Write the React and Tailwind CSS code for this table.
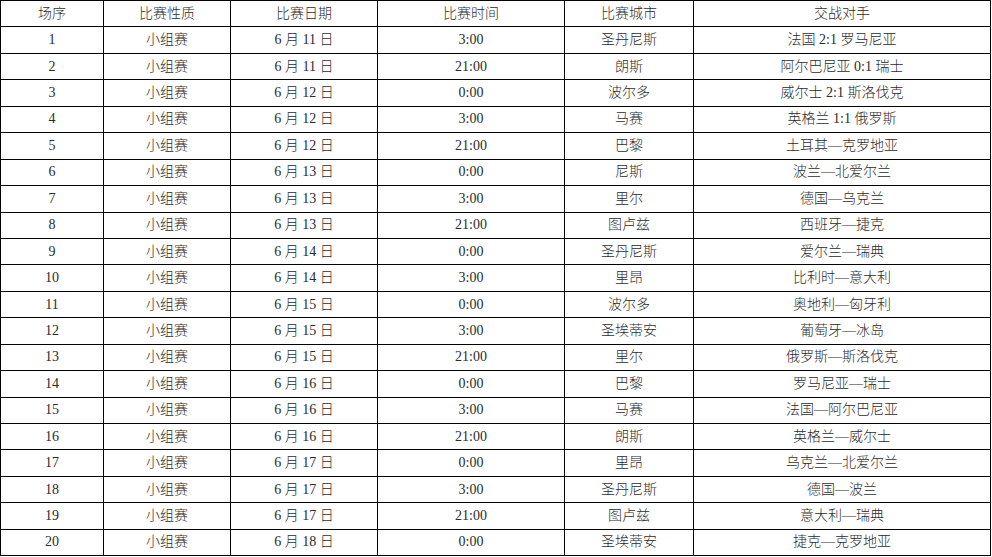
const rows = [
  ['1', '6 月 11 日', '3:00', '圣丹尼斯', '法国 2:1 罗马尼亚'],
  ['2', '6 月 11 日', '21:00', '朗斯', '阿尔巴尼亚 0:1 瑞士'],
  ['3', '6 月 12 日', '0:00', '波尔多', '威尔士 2:1 斯洛伐克'],
  ['4', '6 月 12 日', '3:00', '马赛', '英格兰 1:1 俄罗斯'],
  ['5', '6 月 12 日', '21:00', '巴黎', '土耳其—克罗地亚'],
  ['6', '6 月 13 日', '0:00', '尼斯', '波兰—北爱尔兰'],
  ['7', '6 月 13 日', '3:00', '里尔', '德国—乌克兰'],
  ['8', '6 月 13 日', '21:00', '图卢兹', '西班牙—捷克'],
  ['9', '6 月 14 日', '0:00', '圣丹尼斯', '爱尔兰—瑞典'],
  ['10', '6 月 14 日', '3:00', '里昂', '比利时—意大利'],
  ['11', '6 月 15 日', '0:00', '波尔多', '奥地利—匈牙利'],
  ['12', '6 月 15 日', '3:00', '圣埃蒂安', '葡萄牙—冰岛'],
  ['13', '6 月 15 日', '21:00', '里尔', '俄罗斯—斯洛伐克'],
  ['14', '6 月 16 日', '0:00', '巴黎', '罗马尼亚—瑞士'],
  ['15', '6 月 16 日', '3:00', '马赛', '法国—阿尔巴尼亚'],
  ['16', '6 月 16 日', '21:00', '朗斯', '英格兰—威尔士'],
  ['17', '6 月 17 日', '0:00', '里昂', '乌克兰—北爱尔兰'],
  ['18', '6 月 17 日', '3:00', '圣丹尼斯', '德国—波兰'],
  ['19', '6 月 17 日', '21:00', '图卢兹', '意大利—瑞典'],
  ['20', '6 月 18 日', '0:00', '圣埃蒂安', '捷克—克罗地亚'],
];

const headers = ['场序', '比赛性质', '比赛日期', '比赛时间', '比赛城市', '交战对手'];

const App = () => {
  return (
    <div className="bg-white w-[992px] h-[557px] overflow-hidden">
      <table
        className="table-fixed border-collapse w-[990px] text-[14px] text-[#2b2b2b] font-light leading-none"
        style={{ fontFamily: '"Liberation Serif", "Noto Sans CJK SC", serif' }}
      >
        <colgroup>
          <col className="w-[103px]" />
          <col className="w-[127px]" />
          <col className="w-[147px]" />
          <col className="w-[187px]" />
          <col className="w-[129px]" />
          <col className="w-[297px]" />
        </colgroup>
        <thead>
          <tr className="h-[26.45px]">
            {headers.map((h) => (
              <th key={h} className="border border-black font-light text-center p-0">
                {h}
              </th>
            ))}
          </tr>
        </thead>
        <tbody>
          {rows.map((r) => (
            <tr key={r[0]} className="h-[26.45px]">
              <td className="border border-black text-center p-0">{r[0]}</td>
              <td className="border border-black text-center p-0">小组赛</td>
              <td className="border border-black text-center p-0">{r[1]}</td>
              <td className="border border-black text-center p-0">{r[2]}</td>
              <td className="border border-black text-center p-0">{r[3]}</td>
              <td className="border border-black text-center p-0">{r[4]}</td>
            </tr>
          ))}
        </tbody>
      </table>
    </div>
  );
};

export default App;
